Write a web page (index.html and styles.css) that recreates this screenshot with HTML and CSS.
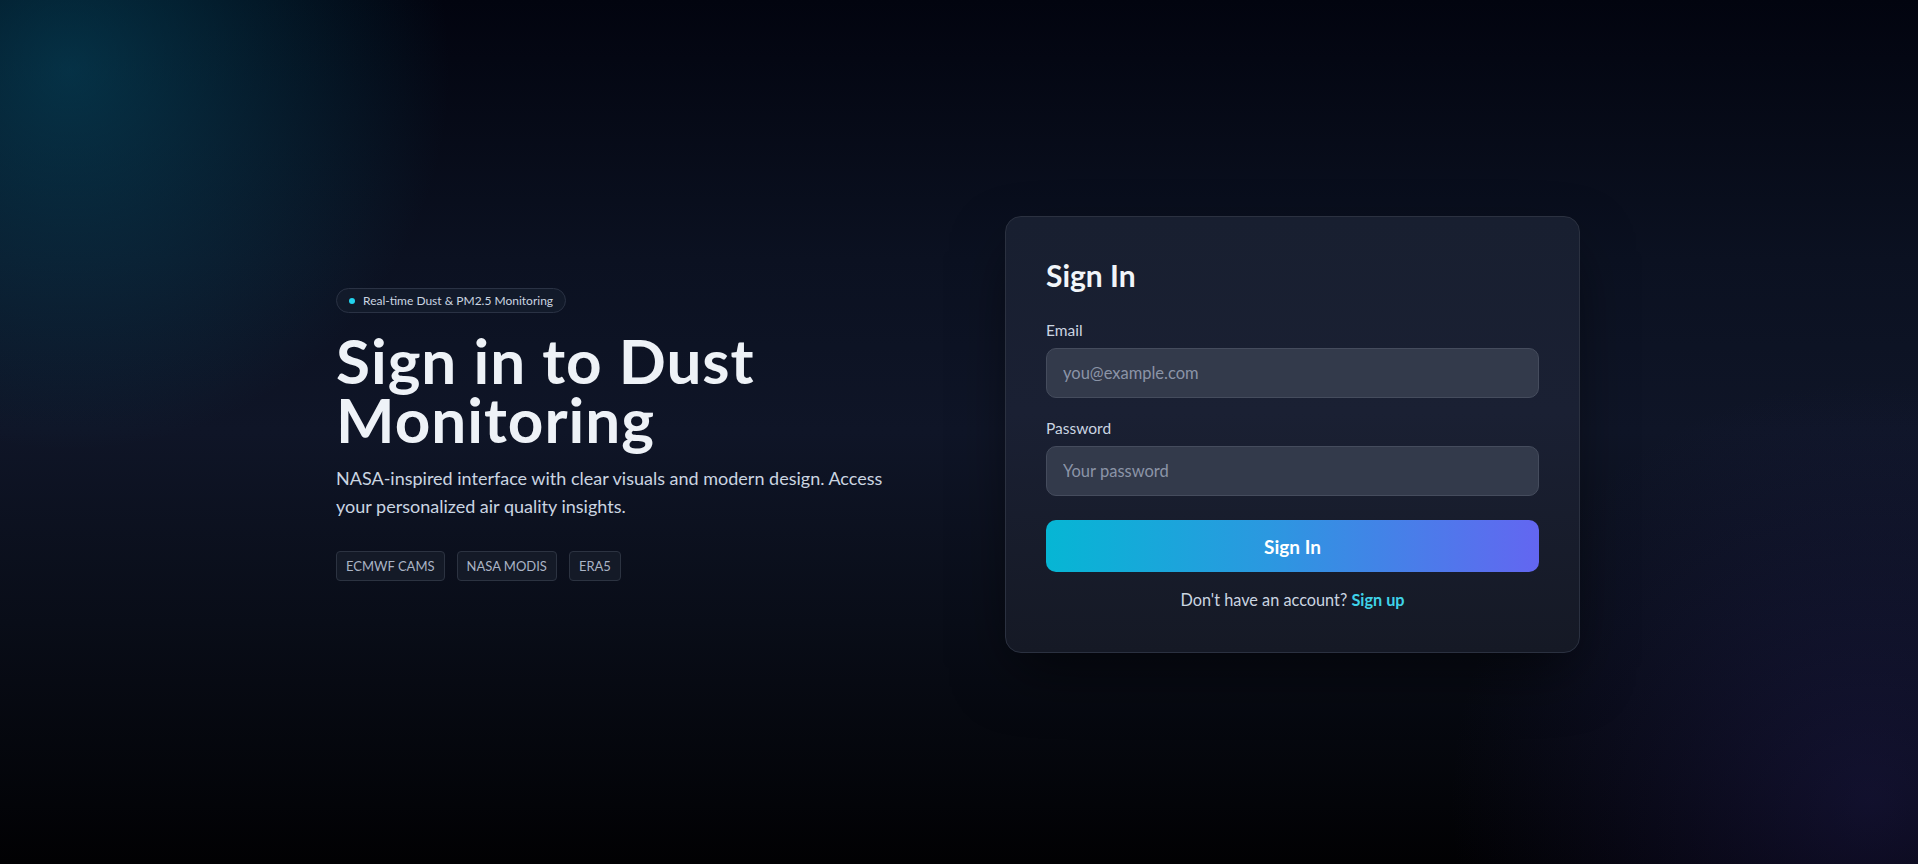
FILE: index.html
```html
<!DOCTYPE html>
<html lang="en">
<head>
<meta charset="utf-8">
<title>Sign in to Dust Monitoring</title>
<link rel="stylesheet" href="styles.css">
</head>
<body>
<main class="page">
  <div class="wrap">
    <section class="intro">
      <span class="badge"><span class="badge-dot"></span>Real-time Dust &amp; PM2.5 Monitoring</span>
      <h1 class="title">Sign in to Dust Monitoring</h1>
      <p class="lead">NASA-inspired interface with clear visuals and modern design. Access your personalized air quality insights.</p>
      <div class="tags">
        <span class="tag">ECMWF CAMS</span>
        <span class="tag">NASA MODIS</span>
        <span class="tag">ERA5</span>
      </div>
    </section>
    <section class="card">
      <h2 class="card-title">Sign In</h2>
      <form class="form">
        <div class="field">
          <label class="label" for="email">Email</label>
          <input class="input" id="email" type="email" placeholder="you@example.com">
        </div>
        <div class="field">
          <label class="label" for="password">Password</label>
          <input class="input" id="password" type="password" placeholder="Your password">
        </div>
        <button class="btn" type="button">Sign In</button>
      </form>
      <p class="alt">Don't have an account? <a class="alt-link" href="#">Sign up</a></p>
    </section>
  </div>
</main>
</body>
</html>
```
FILE: styles.css
```css
* { box-sizing: border-box; }
html, body { margin: 0; padding: 0; }
body {
  font-family: Lato, "Segoe UI", "Noto Sans", sans-serif;
  color: #e2e8f0;
  min-height: 100vh;
  background:
    radial-gradient(circle 380px at 70px 70px, rgba(6, 100, 130, 0.45), rgba(6, 100, 130, 0) 100%),
    radial-gradient(circle 420px at 1870px 800px, rgba(55, 48, 140, 0.28), rgba(55, 48, 140, 0) 100%),
    linear-gradient(180deg, #02040f 0%, #0b1121 30%, #0f1527 50%, #090d18 72%, #010103 100%);
}
.page {
  min-height: 100vh;
  padding-top: 5px;
  padding-right: 2px;
  display: flex;
  align-items: center;
  justify-content: center;
}
.wrap {
  width: 1244px;
  display: flex;
  align-items: center;
  justify-content: space-between;
}
.intro { width: 576px; }
.badge {
  display: inline-flex;
  align-items: center;
  gap: 8px;
  height: 25px;
  padding: 0 12px;
  border: 1px solid #2a3244;
  border-radius: 999px;
  background: #121a2a;
  color: #cbd5e1;
  font-size: 12px;
}
.badge-dot {
  width: 6px;
  height: 6px;
  border-radius: 50%;
  background: #22d3ee;
}
.title {
  margin: 18px 0 0;
  font-size: 62px;
  line-height: 59px;
  font-weight: 700;
  color: #eef2f7;
  letter-spacing: 1px;
}
.lead {
  margin: 15px 0 0;
  font-size: 18px;
  line-height: 28px;
  color: #cbd5e1;
}
.tags {
  margin-top: 31px;
  display: flex;
  gap: 12px;
}
.tag {
  display: inline-block;
  padding: 5px 9px 4px;
  font-size: 13px;
  line-height: 19px;
  color: #aab4c5;
  background: #141a27;
  border: 1px solid #2c3341;
  border-radius: 4px;
}
.card {
  width: 575px;
  padding: 40px;
  border: 1px solid #2b3140;
  border-radius: 16px;
  background: linear-gradient(180deg, #181f30 0%, #1a2033 45%, #151925 100%);
  box-shadow: 0 25px 60px -10px rgba(0, 0, 0, 0.55);
}
.card-title {
  margin: 0;
  font-size: 30px;
  line-height: 36px;
  font-weight: 700;
  color: #f1f5f9;
}
.form {
  margin-top: 27px;
  display: flex;
  flex-direction: column;
  gap: 20px;
}
.field {
  display: flex;
  flex-direction: column;
  gap: 8px;
}
.label {
  font-size: 15.5px;
  line-height: 20px;
  color: #cbd5e1;
}
.input {
  height: 50px;
  padding: 0 16px;
  font-family: inherit;
  font-size: 16.5px;
  color: #e2e8f0;
  background: #333a4b;
  border: 1px solid #454c5d;
  border-radius: 10px;
  outline: none;
}
.input::placeholder { color: #8b94a7; }
.btn {
  margin-top: 4px;
  height: 52px;
  border: none;
  border-radius: 10px;
  font-family: inherit;
  font-size: 19px;
  font-weight: 700;
  color: #ffffff;
  background: linear-gradient(90deg, #06b6d4 0%, #2b98e0 45%, #6366f1 100%);
  cursor: pointer;
}
.alt {
  margin: 16px 0 0;
  text-align: center;
  font-size: 16.3px;
  line-height: 24px;
  color: #cbd5e1;
}
.alt-link {
  color: #3fd2e8;
  font-weight: 700;
  text-decoration: none;
}
```
